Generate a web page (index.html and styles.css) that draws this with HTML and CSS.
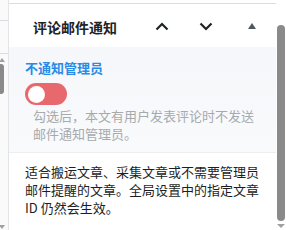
FILE: index.html
```html
<!DOCTYPE html>
<html lang="zh">
<head>
    <meta charset="UTF-8">
    <meta name="viewport" content="width=device-width, initial-scale=1.0">
    <title>评论邮件通知</title>
    <link rel="stylesheet" href="styles.css">
</head>
<body>
    <div class="left-strip">
        <div class="strip-cell"></div>
        <div class="strip-cell"></div>
        <div class="mini-arrow up"></div>
        <div class="mini-thumb"></div>
        <div class="strip-fill"></div>
        <div class="mini-arrow down"></div>
    </div>

    <div class="panel">
        <div class="panel-header">
            <h2>评论邮件通知</h2>
            <div class="header-actions">
                <button class="icon-btn" aria-label="上移">
                    <svg width="14" height="9" viewBox="0 0 14 9"><path d="M1.5 7.5 L7 2 L12.5 7.5" fill="none" stroke="#1d2327" stroke-width="2.2"/></svg>
                </button>
                <button class="icon-btn" aria-label="下移">
                    <svg width="14" height="9" viewBox="0 0 14 9"><path d="M1.5 1.5 L7 7 L12.5 1.5" fill="none" stroke="#1d2327" stroke-width="2.2"/></svg>
                </button>
                <button class="icon-btn small" aria-label="折叠">
                    <svg width="8" height="6" viewBox="0 0 8 6"><path d="M0 6 L4 0 L8 6 Z" fill="#50575e"/></svg>
                </button>
            </div>
        </div>

        <div class="panel-body">
            <div class="field-label">不通知管理员</div>
            <div class="toggle"><span class="knob"></span></div>
            <p class="help">勾选后，本文有用户发表评论时不发送邮件通知管理员。</p>
        </div>

        <div class="panel-note">
            适合搬运文章、采集文章或不需要管理员邮件提醒的文章。全局设置中的指定文章 ID 仍然会生效。
        </div>
    </div>

    <div class="scrollbar">
        <div class="thumb"></div>
        <div class="arrow-down"></div>
    </div>
</body>
</html>
```

FILE: styles.css
```css
/* Stilregeln */
body {
    margin: 0;
    width: 286px;
    height: 230px;
    overflow: hidden;
    display: flex;
    font-family: "Noto Sans CJK SC", "Liberation Sans", sans-serif;
    background-color: #fff;
    color: #1e1e1e;
}

.left-strip {
    width: 8px;
    border-right: 1px solid #e2e4e7;
    background-color: #fafafa;
    display: flex;
    flex-direction: column;
    align-items: flex-start;
}

.strip-cell {
    width: 100%;
    height: 20px;
    border-bottom: 1px solid #dcdcde;
}

.strip-cell + .strip-cell {
    height: 32px;
}

.mini-arrow {
    width: 0;
    height: 0;
    border-left: 3px solid transparent;
    border-right: 3px solid transparent;
    margin-left: -1px;
}

.mini-arrow.up {
    margin-top: 4px;
    border-bottom: 4px solid #a0a0a0;
}

.mini-arrow.down {
    margin-bottom: 1px;
    border-top: 4px solid #a0a0a0;
}

.mini-thumb {
    margin-top: 2px;
    width: 4px;
    height: 30px;
    background-color: #8a8a8a;
    border-radius: 0 3px 3px 0;
}

.strip-fill {
    flex: 1;
}

.panel {
    flex: 1;
    display: flex;
    flex-direction: column;
    margin-top: 3px;
    border-top: 1px solid #dcdcde;
}

.panel-header {
    height: 41px;
    padding-top: 2px;
    display: flex;
    align-items: center;
    justify-content: space-between;
    padding-left: 24px;
    background-color: #fff;
}

.panel-header h2 {
    margin: 0;
    font-size: 14px;
    font-weight: 700;
    color: #1d2327;
}

.header-actions {
    display: flex;
    align-items: center;
}

.icon-btn {
    background: none;
    border: none;
    padding: 0;
    width: 44px;
    height: 32px;
    display: flex;
    align-items: center;
    justify-content: center;
    cursor: pointer;
}

.icon-btn.small {
    width: 48px;
    padding-bottom: 2px;
}

.panel-body {
    background: linear-gradient(#f5f7fa, #f9fafc);
    padding: 12px 16px 9px 16px;
    border-bottom: 1px solid #eceef1;
}

.field-label {
    color: #2a8be6;
    font-size: 13px;
    font-weight: 700;
    line-height: 18px;
}

.toggle {
    margin-top: 6px;
    width: 42px;
    height: 22px;
    border-radius: 11px;
    background-color: #e8696d;
    display: flex;
    align-items: center;
    padding-left: 3px;
    box-sizing: border-box;
}

.knob {
    width: 17px;
    height: 17px;
    border-radius: 50%;
    background-color: #fff;
}

.help {
    margin: 2px 0 0 8px;
    font-size: 13px;
    line-height: 18px;
    color: #a7aaad;
}

.panel-note {
    padding: 10px 16px 0 16px;
    font-size: 13px;
    line-height: 18px;
    color: #1e1e1e;
}

.scrollbar {
    width: 10px;
    display: flex;
    flex-direction: column;
    align-items: center;
    padding-top: 25px;
}

.thumb {
    width: 8px;
    flex: 1;
    background-color: #8a8a8a;
    border-radius: 4px;
}

.arrow-down {
    margin: 3px 0 2px 0;
    width: 0;
    height: 0;
    border-left: 4px solid transparent;
    border-right: 4px solid transparent;
    border-top: 4px solid #a0a0a0;
}
```
